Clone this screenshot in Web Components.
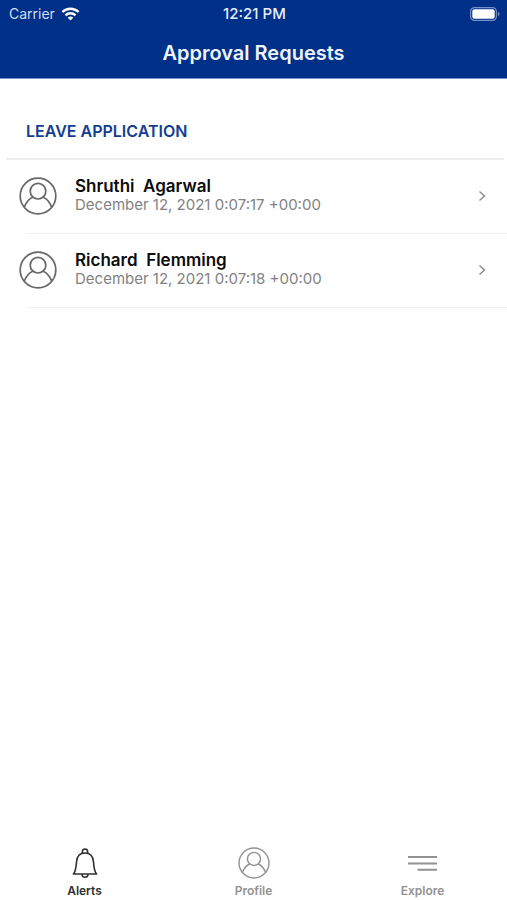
<!DOCTYPE html>
<html lang="en">
<head>
<meta charset="utf-8">
<meta name="viewport" content="width=device-width, initial-scale=1">
<title>Approval Requests</title>
<style>
  body { margin: 0; background: #fff; color: #0b0b0b; font-family: Inter, "Liberation Sans", sans-serif; }
</style>
</head>
<body>
<approval-app></approval-app>
<script>
const define = (name, html) => customElements.define(name, class extends HTMLElement {
  constructor() {
    super();
    const t = document.createElement('template');
    t.innerHTML = html;
    this.attachShadow({ mode: 'open' }).append(t.content.cloneNode(true));
  }
});

define('person-icon', `
  <style>:host { display: block; } svg { display: block; width: 100%; height: 100%; }</style>
  <svg viewBox="0 0 38 38" fill="none" stroke="currentColor" stroke-width="1.7" aria-hidden="true">
    <circle cx="19" cy="19" r="17.8"/>
    <circle cx="19" cy="14.2" r="7.8"/>
    <path d="M5 30.6C7 25.4 9.6 21.8 14 20.2M33 30.6C31 25.4 28.4 21.8 24 20.2"/>
  </svg>`);

define('bell-icon', `
  <style>:host { display: block; } svg { display: block; width: 100%; height: 100%; }</style>
  <svg viewBox="0 0 32 32" fill="none" stroke="currentColor" stroke-width="1.6" stroke-linejoin="round" aria-hidden="true">
    <path d="M4.4 27C7 24 7.2 20 7.5 15C7.9 9.6 10.8 6 16 6S24.1 9.6 24.5 15C24.8 20 25 24 27.6 27Z"/>
    <path d="M13.4 6.3V4.6A2.6 2.6 0 0 1 18.6 4.6V6.3M13 27.2A3 3 0 0 0 19 27.2"/>
  </svg>`);

define('menu-icon', `
  <style>:host { display: block; } svg { display: block; width: 100%; height: 100%; }</style>
  <svg viewBox="0 0 32 32" fill="none" stroke="currentColor" stroke-width="2" aria-hidden="true">
    <path d="M1 10H30M1 16.4H30M10.5 22.8H30"/>
  </svg>`);

define('status-bar', `
  <style>
    :host { display: grid; grid-template-columns: 1fr auto 1fr; align-items: center; height: 27px;
      padding: 0 7px 0 9px; font-size: 14px; line-height: 20px; }
    .carrier { display: flex; align-items: center; gap: 6px; color: #d2dcf4; }
    .time { font-size: 15px; font-weight: 500; color: #e6edff; }
    svg { display: block; }
    .battery { justify-self: end; }
  </style>
  <span class="carrier">Carrier
    <svg width="19" height="14" viewBox="0 0 18 14" fill="none" stroke="#fff" stroke-width="2.4" role="img" aria-label="Wi-Fi">
      <path d="M.9 5A11.6 11.6 0 0 1 17.1 5M4 8.3A7 7 0 0 1 14 8.3"/>
      <path d="M6.2 10.7Q9 8.4 11.8 10.7L9 13.6Z" fill="#fff" stroke="none"/>
    </svg>
  </span>
  <span class="time">12:21 PM</span>
  <svg class="battery" width="30" height="14" viewBox="0 0 30 14" role="img" aria-label="Battery full">
    <rect x=".6" y=".6" width="25.8" height="12.8" rx="4" fill="none" stroke="#7890c8" stroke-width="1.2"/>
    <rect x="2.3" y="2.3" width="22.4" height="9.4" rx="2.2" fill="#fff"/>
    <path d="M28 4.8Q29.6 5.6 29.6 7T28 9.2Z" fill="#7890c8"/>
  </svg>`);

define('app-header', `
  <style>
    :host { display: block; background: #003087; border-bottom: 1px solid #6f8fcb; }
    h1 { margin: 0; padding: 12px 16px 11px; font-size: 20px; line-height: 28px; font-weight: 600; text-align: center; color: #eef3ff; }
  </style>
  <status-bar></status-bar>
  <h1><slot></slot></h1>`);

define('request-section', `
  <style>
    :host { display: block; padding-top: 41px; }
    h2 { margin: 0 3px 0 6px; padding: 0 20px 16px; border-bottom: 2px solid #ededed;
      font-size: 16px; line-height: 22px; font-weight: 600; color: #133d91; }
  </style>
  <h2><slot name="title"></slot></h2>
  <div role="list"><slot></slot></div>`);

define('request-row', `
  <style>
    :host { display: block; }
    a { display: grid; grid-template-columns: 38px 1fr 8px; column-gap: 18px; align-items: center;
      box-sizing: border-box; height: 73px; padding: 0 21px 1px 19px; color: inherit; text-decoration: none; }
    person-icon { width: 38px; height: 38px; color: #686868; }
    .text { padding-bottom: 2px; }
    .name { font-size: 17px; line-height: 20px; font-weight: 600; white-space: pre; }
    .date { font-size: 15px; line-height: 18px; color: #828282; }
    svg { display: block; }
    .rule { height: 1px; margin-left: 27px; background: #f1f1f1; }
  </style>
  <a href="#request">
    <person-icon></person-icon>
    <div class="text"><div class="name"><slot name="name"></slot></div><div class="date"><slot name="date"></slot></div></div>
    <svg width="8" height="12" viewBox="0 0 8 12" fill="none" stroke="#8c8c8c" stroke-width="1.5" aria-hidden="true"><path d="M1.5 1.5L6.5 6L1.5 10.5"/></svg>
  </a>
  <div class="rule"></div>`);

define('tab-item', `
  <style>
    :host { display: block; color: #929292; }
    :host([active]) { color: #303030; }
    a { display: flex; flex-direction: column; align-items: center; gap: 4px; color: inherit; text-decoration: none;
      font-size: 12px; line-height: 16px; font-weight: 600; }
    ::slotted([slot=icon]) { width: 32px; height: 32px; }
  </style>
  <a href="#tab"><slot name="icon"></slot><span><slot></slot></span></a>`);

define('tab-bar', `
  <style>:host { display: grid; grid-template-columns: repeat(3, 1fr); padding-bottom: 1px; }</style>
  <slot></slot>`);

define('approval-app', `
  <style>
    :host { display: flex; flex-direction: column; min-height: 100vh; }
    main { flex: 1; }
  </style>
  <app-header>Approval Requests</app-header>
  <main>
    <request-section>
      <span slot="title">LEAVE APPLICATION</span>
      <request-row role="listitem"><span slot="name">Shruthi  Agarwal</span><span slot="date">December 12, 2021 0:07:17 +00:00</span></request-row>
      <request-row role="listitem"><span slot="name">Richard  Flemming</span><span slot="date">December 12, 2021 0:07:18 +00:00</span></request-row>
    </request-section>
  </main>
  <tab-bar role="navigation" aria-label="Main">
    <tab-item active><bell-icon slot="icon"></bell-icon>Alerts</tab-item>
    <tab-item><person-icon slot="icon"></person-icon>Profile</tab-item>
    <tab-item><menu-icon slot="icon"></menu-icon>Explore</tab-item>
  </tab-bar>`);
</script>
</body>
</html>
